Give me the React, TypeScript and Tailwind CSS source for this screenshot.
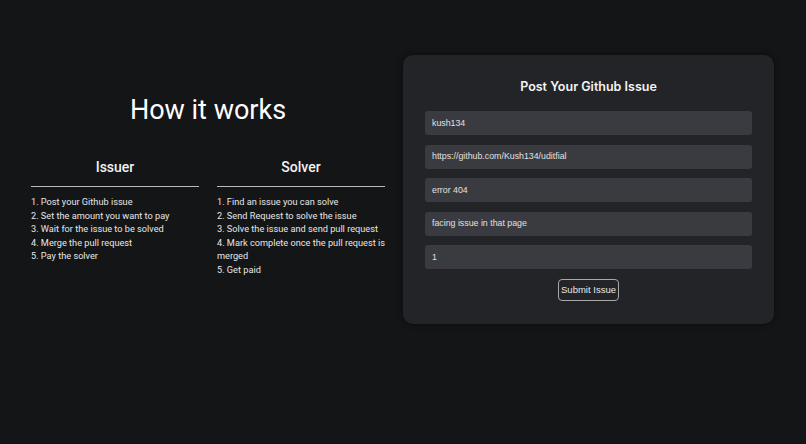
const issuerSteps = [
  "1. Post your Github issue",
  "2. Set the amount you want to pay",
  "3. Wait for the issue to be solved",
  "4. Merge the pull request",
  "5. Pay the solver",
];

const solverSteps = [
  "1. Find an issue you can solve",
  "2. Send Request to solve the issue",
  "3. Solve the issue and send pull request",
  "4. Mark complete once the pull request is merged",
  "5. Get paid",
];

const fields = [
  "kush134",
  "https://github.com/Kush134/uditfial",
  "error 404",
  "facing issue in that page",
  "1",
];

function StepColumn({ title, steps }: { title: string; steps: string[] }) {
  return (
    <div className="w-[168px]">
      <h2 className="text-center text-[14px] leading-[20px] font-medium text-[#f2f2f2]">{title}</h2>
      <div className="mt-[9px] h-px bg-[#b9b9b9]" />
      <ol className="mt-[8px] text-[9.2px] leading-[13.5px] text-[#e6e6e6]">
        {steps.map((s) => (
          <li key={s}>{s}</li>
        ))}
      </ol>
    </div>
  );
}

export default function App() {
  return (
    <div className="min-h-[444px] w-full bg-[#141517] font-['Roboto',sans-serif]">
      <div className="flex items-start gap-[18px] pl-[31px] pt-[55px]">
        {/* 左側: 使い方 */}
        <div className="w-[354px] pt-[36px]">
          <h1 className="text-center text-[27px] leading-[38px] font-normal text-white">How it works</h1>
          <div className="mt-[28px] flex gap-[18px]">
            <StepColumn title="Issuer" steps={issuerSteps} />
            <StepColumn title="Solver" steps={solverSteps} />
          </div>
        </div>

        {/* 右側: フォーム */}
        <div className="w-[371px] rounded-[10px] bg-[#232427] px-[22px] pt-[22px] pb-[23px] shadow-[0_0_6px_rgba(0,0,0,0.5)]">
          <h2 className="text-center font-['Inter',sans-serif] text-[12.5px] leading-[20px] font-semibold text-[#f4f4f4]">
            Post Your Github Issue
          </h2>
          <div className="mt-[14px] flex flex-col gap-[9.5px]">
            {fields.map((f) => (
              <div
                key={f}
                className="flex h-[24px] items-center rounded-[3px] bg-[#3a3b40] px-[7px] pt-px font-['Liberation_Sans',sans-serif] text-[8.8px] text-[#e0e0e0]"
              >
                {f}
              </div>
            ))}
          </div>
          <div className="mt-[10px] flex justify-center">
            <button className="h-[22px] w-[61px] rounded-[4px] border border-[#a8a8a8] font-['Liberation_Sans',sans-serif] text-[9.5px] text-[#e8e8e8]">
              Submit Issue
            </button>
          </div>
        </div>
      </div>
    </div>
  );
}
